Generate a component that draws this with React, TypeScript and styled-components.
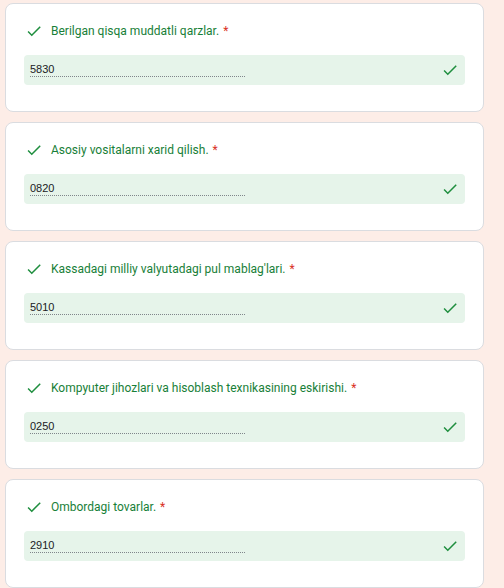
import React from "react";
import styled, { createGlobalStyle } from "styled-components";

const Global = createGlobalStyle`
  html, body { margin: 0; padding: 0; background: #fdede7; }
  body { font-family: Roboto, "Liberation Sans", Arial, sans-serif; }
`;

const Page = styled.div`
  display: flex;
  flex-direction: column;
  gap: 10px;
  padding: 3px 20px 0 5px;
  width: 479px;
`;

const Card = styled.div`
  box-sizing: border-box;
  height: 109px;
  background: #ffffff;
  border: 1px solid #dadce0;
  border-radius: 8px;
  padding: 17px 18px 0 18px;
  display: flex;
  flex-direction: column;
  gap: 14px;
`;

const TitleRow = styled.div`
  display: flex;
  align-items: center;
  height: 20px;
  gap: 8px;
  padding-left: 1px;
`;

const Title = styled.span`
  font-size: 12px;
  color: #188038;
`;

const Req = styled.span`
  color: #d93025;
  margin-left: 4px;
`;

const Field = styled.div`
  box-sizing: border-box;
  height: 30px;
  background: #e6f4ea;
  border-radius: 4px;
  display: flex;
  align-items: flex-start;
  justify-content: space-between;
  padding: 0 6px 0 6px;
`;

const Value = styled.div`
  width: 215px;
  margin-top: 7px;
  height: 14px;
  font-family: "Liberation Sans", Arial, sans-serif;
  font-size: 11px;
  line-height: 14px;
  color: #202124;
  border-bottom: 1px dotted #80868b;
`;

const RightIcon = styled.div`
  margin-top: 6px;
  display: flex;
`;

const Check = ({ size }: { size: number }) => (
  <svg width={size} height={size} viewBox="0 0 24 24" fill="#1e8e3e">
    <path d="M9 16.17L4.83 12l-1.42 1.41L9 19 21 7l-1.41-1.41z" />
  </svg>
);

const items = [
  { title: "Berilgan qisqa muddatli qarzlar.", value: "5830" },
  { title: "Asosiy vositalarni xarid qilish.", value: "0820" },
  { title: "Kassadagi milliy valyutadagi pul mablag'lari.", value: "5010" },
  { title: "Kompyuter jihozlari va hisoblash texnikasining eskirishi.", value: "0250" },
  { title: "Ombordagi tovarlar.", value: "2910" },
];

export default function App() {
  return (
    <>
      <Global />
      <Page>
        {items.map((it) => (
          <Card key={it.value}>
            <TitleRow>
              <Check size={18} />
              <Title>
                {it.title}
                <Req>*</Req>
              </Title>
            </TitleRow>
            <Field>
              <Value>{it.value}</Value>
              <RightIcon>
                <Check size={18} />
              </RightIcon>
            </Field>
          </Card>
        ))}
      </Page>
    </>
  );
}
